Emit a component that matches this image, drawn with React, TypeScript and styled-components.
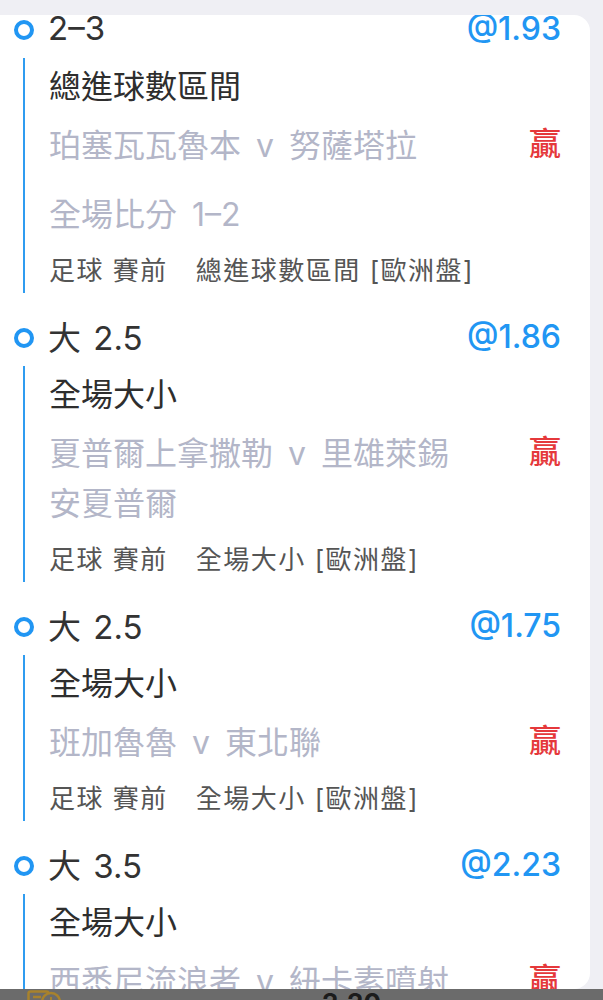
import React from "react";
import styled, { createGlobalStyle } from "styled-components";

const Global = createGlobalStyle`
  html, body { margin: 0; padding: 0; }
  body {
    background: #efeff4;
    font-family: "Inter", "Noto Sans CJK TC", sans-serif;
    overflow: hidden;
    height: 1000px;
  }
`;

const Card = styled.div`
  margin-top: 15px;
  width: 590px;
  height: 974px;
  background: #ffffff;
  border-radius: 0 16px 16px 0;
  overflow: hidden;
`;

const List = styled.div`
  margin-top: -7px;
`;

const Item = styled.div`
  margin-bottom: 23px;
`;

const Header = styled.div`
  display: flex;
  align-items: center;
  height: 40px;
  padding-right: 29px;
`;

const Dot = styled.span`
  box-sizing: border-box;
  width: 20px;
  height: 20px;
  border-radius: 50%;
  border: 4.5px solid #2196f3;
  margin: 4px 14px 0 14px;
  flex: none;
`;

const Pick = styled.span`
  font-size: 33px;
  color: #333333;
  white-space: pre;
  word-spacing: 3px;
`;

const Odds = styled.span`
  margin-left: auto;
  font-size: 32px;
  font-weight: 500;
  color: #2196f3;
`;

const Body = styled.div`
  margin: 10px 0 0 23px;
  border-left: 2px solid #2f9cf0;
  padding: 6px 29px 0 24px;
`;

const Title = styled.div`
  font-size: 32px;
  line-height: 46px;
  color: #2e2e2e;
`;

const MatchRow = styled.div`
  display: flex;
  align-items: flex-start;
  margin-top: 11px;
`;

const MatchText = styled.div`
  width: 412px;
  font-size: 32px;
  line-height: 50px;
  color: #b3b6c8;
  word-spacing: 6px;
`;

const Result = styled.span`
  margin-left: auto;
  font-size: 32px;
  font-weight: 500;
  line-height: 46px;
  color: #e5383b;
`;

const Score = styled.div`
  margin-top: 19px;
  font-size: 32px;
  line-height: 50px;
  color: #b3b6c8;
  word-spacing: 6px;
`;

const Meta = styled.div`
  margin-top: 9px;
  font-size: 26px;
  line-height: 44px;
  letter-spacing: 1.5px;
  color: #555555;
`;

const MetaGap = styled.span`
  margin-left: 28px;
`;

const BottomBar = styled.div`
  position: fixed;
  left: 0;
  right: 0;
  bottom: 0;
  height: 11px;
  background: #6b6b6b;
  overflow: hidden;
  display: flex;
  align-items: flex-start;
`;

const BarIcon = styled.svg`
  margin: 1px 0 0 27px;
  flex: none;
`;

const BarValue = styled.span`
  margin: -1px 0 0 259px;
  font-size: 26px;
  font-weight: 700;
  line-height: 30px;
  color: #1c1c1c;
`;

type Bet = {
  pick: string;
  odds: string;
  title: string;
  match: string;
  score?: string;
  meta: string;
};

const bets: Bet[] = [
  {
    pick: "2–3",
    odds: "@1.93",
    title: "總進球數區間",
    match: "珀塞瓦瓦魯本 v 努薩塔拉",
    score: "全場比分 1–2",
    meta: "總進球數區間 [歐洲盤]",
  },
  {
    pick: "大 2.5",
    odds: "@1.86",
    title: "全場大小",
    match: "夏普爾上拿撒勒 v 里雄萊錫安夏普爾",
    meta: "全場大小 [歐洲盤]",
  },
  {
    pick: "大 2.5",
    odds: "@1.75",
    title: "全場大小",
    match: "班加魯魯 v 東北聯",
    meta: "全場大小 [歐洲盤]",
  },
  {
    pick: "大 3.5",
    odds: "@2.23",
    title: "全場大小",
    match: "西悉尼流浪者 v 紐卡素噴射",
    meta: "全場大小 [歐洲盤]",
  },
];

export default function App() {
  return (
    <>
      <Global />
      <Card>
        <List>
          {bets.map((b, i) => (
            <Item key={i}>
              <Header>
                <Dot />
                <Pick>{b.pick}</Pick>
                <Odds>{b.odds}</Odds>
              </Header>
              <Body>
                <Title>{b.title}</Title>
                <MatchRow>
                  <MatchText>{b.match}</MatchText>
                  <Result>贏</Result>
                </MatchRow>
                {b.score && <Score>{b.score}</Score>}
                <Meta>
                  足球 賽前<MetaGap>{b.meta}</MetaGap>
                </Meta>
              </Body>
            </Item>
          ))}
        </List>
      </Card>
      <BottomBar>
        <BarIcon width="36" height="24" viewBox="0 0 36 24">
          <rect x="1.5" y="1.5" width="20" height="20" rx="2" fill="none" stroke="#a8822c" strokeWidth="2.5" />
          <line x1="6" y1="7" x2="14" y2="7" stroke="#a8822c" strokeWidth="2.5" />
          <circle cx="24" cy="12" r="9" fill="#6b6b6b" stroke="#a8822c" strokeWidth="2.5" />
          <path d="M24 7 V12 H28" fill="none" stroke="#a8822c" strokeWidth="2" />
        </BarIcon>
        <BarValue>2.20</BarValue>
      </BottomBar>
    </>
  );
}
